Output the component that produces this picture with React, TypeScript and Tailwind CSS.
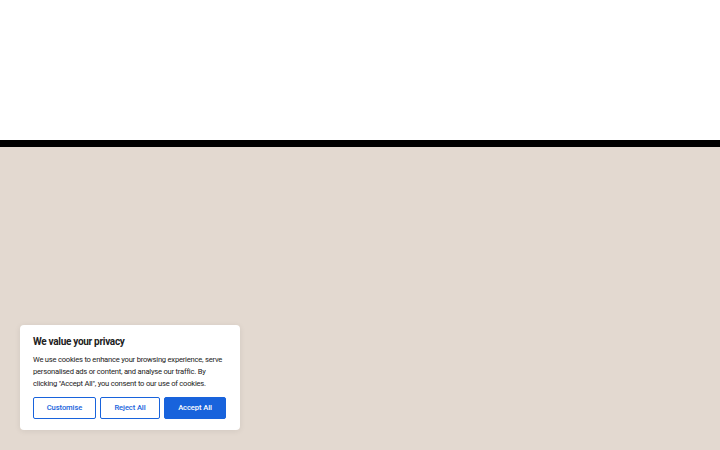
import React from 'react';

export default function App() {
    return (
        <div className="relative w-[720px] h-[450px] overflow-hidden flex flex-col" style={{ fontFamily: 'Roboto, "Liberation Sans", sans-serif' }}>
            <div className="h-[140px] bg-white shrink-0" />
            <div className="h-[7px] bg-black shrink-0" />
            <div className="flex-1 bg-[#e3d9d0]" />

            {/* Cookie consent */}
            <div className="absolute left-[20px] top-[325px] w-[220px] bg-white rounded-[4px] shadow-[0_1px_6px_rgba(0,0,0,0.08)] px-[13px] pt-[10px] pb-[11px]">
                <h3 className="text-[10px] font-bold text-[#212121] leading-[14px] mb-[5px] tracking-[-0.3px]">We value your privacy</h3>
                <p className="text-[7.6px] leading-[12px] text-[#212121] mb-[7px] tracking-[-0.22px]">
                    We use cookies to enhance your browsing experience, serve personalised ads or content, and analyse our traffic. By clicking "Accept All", you consent to our use of cookies.
                </p>
                <div className="flex gap-[4px]">
                    <button className="w-[63px] h-[22px] border-[1.5px] border-[#1863dc] rounded-[2px] text-[7.6px] text-[#1863dc] font-medium tracking-[-0.1px]">Customise</button>
                    <button className="w-[60px] h-[22px] border-[1.5px] border-[#1863dc] rounded-[2px] text-[7.6px] text-[#1863dc] font-medium tracking-[-0.1px]">Reject All</button>
                    <button className="w-[62px] h-[22px] bg-[#1863dc] border-[1.5px] border-[#1863dc] rounded-[2px] text-[7.6px] text-white font-medium tracking-[-0.1px]">Accept All</button>
                </div>
            </div>
        </div>
    );
}
